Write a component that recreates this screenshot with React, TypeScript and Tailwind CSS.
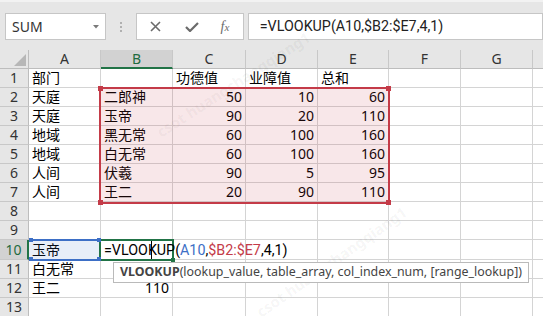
import React from 'react';

const COL_W = [72, 72, 73, 72, 71, 72, 72, 72];
const LETTERS = ['A', 'B', 'C', 'D', 'E', 'F', 'G', ''];
const ROW_H = [19, 19, 19, 19, 19, 19, 19, 19, 19, 20, 19, 19, 19];
const ROWS: string[][] = [
  ['部门', '', '功德值', '业障值', '总和'],
  ['天庭', '二郎神', '50', '10', '60'],
  ['天庭', '玉帝', '90', '20', '110'],
  ['地域', '黑无常', '60', '100', '160'],
  ['地域', '白无常', '60', '100', '160'],
  ['人间', '伏羲', '90', '5', '95'],
  ['人间', '王二', '20', '90', '110'],
  [],
  [],
  ['玉帝'],
  ['白无常'],
  ['王二', '110'],
  [],
];

const FONT = "[font-family:'Noto_Sans','Noto_Sans_CJK_SC',sans-serif]";
const FORMULA_FONT = "[font-family:'Roboto','Noto_Sans_CJK_SC',sans-serif]";

function Sq({ x, y, c, s = 5 }: { x: number; y: number; c: string; s?: number }) {
  return (
    <div
      className="absolute"
      style={{ left: x, top: y, width: s, height: s, background: c }}
    />
  );
}

export default function App() {
  return (
    <div className={`relative w-[543px] h-[316px] overflow-hidden bg-white ${FONT}`}>
      {/* Toolbar */}
      <div className="h-[50px] bg-[#e6e6e6] flex flex-col">
        <div className="h-[2px] bg-[#f2f2f2]" />
        <div className="flex items-start pt-[11px]">
          <div className="ml-[5px] w-[102px] h-[27px] bg-white border border-[#c6c6c6] flex items-center pl-[6px] pr-[6px] justify-between">
            <span className="text-[14px] text-[#333] leading-none">SUM</span>
            <svg width="6" height="4" viewBox="0 0 6 4">
              <path d="M0 0 L6 0 L3 3.5 Z" fill="#7a7a7a" />
            </svg>
          </div>
          <div className="ml-[14px] mt-[9px] flex flex-col gap-[2px]">
            <div className="w-[2px] h-[2px] bg-[#b0b0b0]" />
            <div className="w-[2px] h-[2px] bg-[#b0b0b0]" />
            <div className="w-[2px] h-[2px] bg-[#b0b0b0]" />
          </div>
          <div className="ml-[14px] w-[110px] h-[27px] bg-white border border-[#c6c6c6] flex items-center">
            <svg className="ml-[13px]" width="11" height="11" viewBox="0 0 11 11">
              <path d="M1 1 L10 10 M10 1 L1 10" stroke="#6b6b6b" strokeWidth="1.6" />
            </svg>
            <svg className="ml-[24px]" width="14" height="10" viewBox="0 0 14 10">
              <path d="M1 5 L5 9 L13 1" stroke="#6b6b6b" strokeWidth="2.2" fill="none" />
            </svg>
            <span className="ml-[22px] text-[14px] italic text-[#6b6b6b] leading-none [font-family:'Liberation_Serif',serif]">
              f<span className="text-[11px]">x</span>
            </span>
          </div>
          <div className="ml-[4px] w-[300px] h-[27px] bg-white border border-[#c6c6c6] flex items-center pl-[11px]">
            <span className={`text-[14.3px] text-[#222] leading-none whitespace-nowrap ${FORMULA_FONT}`}>
              =VLOOKUP(A10,$B2:$E7,4,1)
            </span>
          </div>
        </div>
      </div>

      {/* Column headers */}
      <div className="flex h-[19px]">
        <div className="w-[29px] shrink-0 h-full bg-[#e6e6e6] border-r border-b border-[#bdbdbd] relative">
          <svg className="absolute right-[2px] bottom-[2px]" width="12" height="12" viewBox="0 0 12 12">
            <path d="M12 0 L12 12 L0 12 Z" fill="#b7b7b7" />
          </svg>
        </div>
        {LETTERS.map((l, i) => {
          const sel = i === 1;
          return (
            <div
              key={i}
              style={{ width: COL_W[i] }}
              className={`h-full shrink-0 flex items-center justify-center text-[14px] leading-none border-r border-[#c8c8c8] ${
                sel
                  ? 'bg-[#d2d2d2] border-b-2 border-b-[#217346] text-[#1e6b40]'
                  : 'bg-[#e6e6e6] border-b border-b-[#bdbdbd] text-[#333]'
              }`}
            >
              {l}
            </div>
          );
        })}
      </div>

      {/* Rows */}
      {ROW_H.map((h, r) => {
        const selRow = r === 9;
        return (
          <div key={r} className="flex" style={{ height: h }}>
            <div
              className={`w-[29px] shrink-0 h-full flex items-center justify-center text-[14px] leading-none border-b border-[#c8c8c8] ${
                selRow
                  ? 'bg-[#d2d2d2] border-r-2 border-r-[#217346] text-[#1e6b40]'
                  : 'bg-[#e6e6e6] border-r border-r-[#bdbdbd] text-[#333]'
              }`}
            >
              {r + 1}
            </div>
            {COL_W.map((w, c) => {
              const v = ROWS[r][c] ?? '';
              const num = /^\d+$/.test(v);
              return (
                <div
                  key={c}
                  style={{ width: w }}
                  className={`h-full shrink-0 border-r border-b border-[#d4d4d4] flex items-center text-[14px] leading-none text-black whitespace-nowrap ${
                    num ? 'justify-end pr-[3px]' : 'justify-start pl-[3px]'
                  }`}
                >
                  {v}
                </div>
              );
            })}
          </div>
        );
      })}

      {/* Watermarks */}
      <div className="absolute left-[158px] top-[122px] origin-left -rotate-[33deg] text-[15px] font-bold text-black/[0.05] whitespace-nowrap pointer-events-none">
        csot huangchangqiang1
      </div>
      <div className="absolute left-[258px] top-[302px] origin-left -rotate-[35deg] text-[15px] font-bold text-black/[0.05] whitespace-nowrap pointer-events-none">
        csot huangchangqiang1
      </div>

      {/* Red range B2:E7 */}
      <div className="absolute left-[99px] top-[87px] w-[291px] h-[117px] border-2 border-[#c43b48] bg-[rgba(200,60,72,0.12)]" />
      <Sq x={98} y={86} c="#c43b48" />
      <Sq x={386} y={86} c="#c43b48" />
      <Sq x={98} y={200} c="#c43b48" />
      <Sq x={386} y={200} c="#c43b48" />

      {/* Blue range A10 */}
      <div className="absolute left-[29px] top-[239px] w-[72px] h-[22px] border-t-2 border-r-2 border-b-2 border-[#3d6fc6] bg-[rgba(68,114,196,0.12)]" />
      {/* Green edit cell B10 */}
      <div className="absolute left-[99px] top-[239px] w-[75px] h-[22px] border-2 border-[#217346]" />
      <Sq x={171} y={258} c="#217346" s={4} />
      <Sq x={29} y={238} c="#3d6fc6" s={4} />
      <Sq x={97} y={238} c="#3d6fc6" s={4} />
      <Sq x={29} y={257} c="#3d6fc6" s={4} />
      <Sq x={97} y={257} c="#3d6fc6" s={4} />

      {/* Edit text */}
      <div className={`absolute left-[104px] top-[240px] h-[20px] flex items-center text-[14.3px] leading-none whitespace-nowrap text-black ${FORMULA_FONT}`}>
        <span>=VLOO</span>
        <span className="relative w-0 h-[18px] inline-block">
          <span className="absolute left-[3px] top-0 w-px h-[18px] bg-black" />
        </span>
        <span>KUP(</span>
        <span className="text-[#3d6fc6]">A10</span>
        <span>,</span>
        <span className="text-[#c43b48]">$B2:$E7</span>
        <span>,4,1)</span>
      </div>

      {/* Tooltip */}
      <div className="absolute left-[113px] top-[262px] w-[416px] h-[21px] bg-white border border-[#bababa] flex items-center pl-[6px] text-[12.4px] leading-none text-[#444] whitespace-nowrap">
        <span className="font-bold">VLOOKUP</span>
        <span>(lookup_value, table_array, col_index_num, [range_lookup])</span>
      </div>
    </div>
  );
}
